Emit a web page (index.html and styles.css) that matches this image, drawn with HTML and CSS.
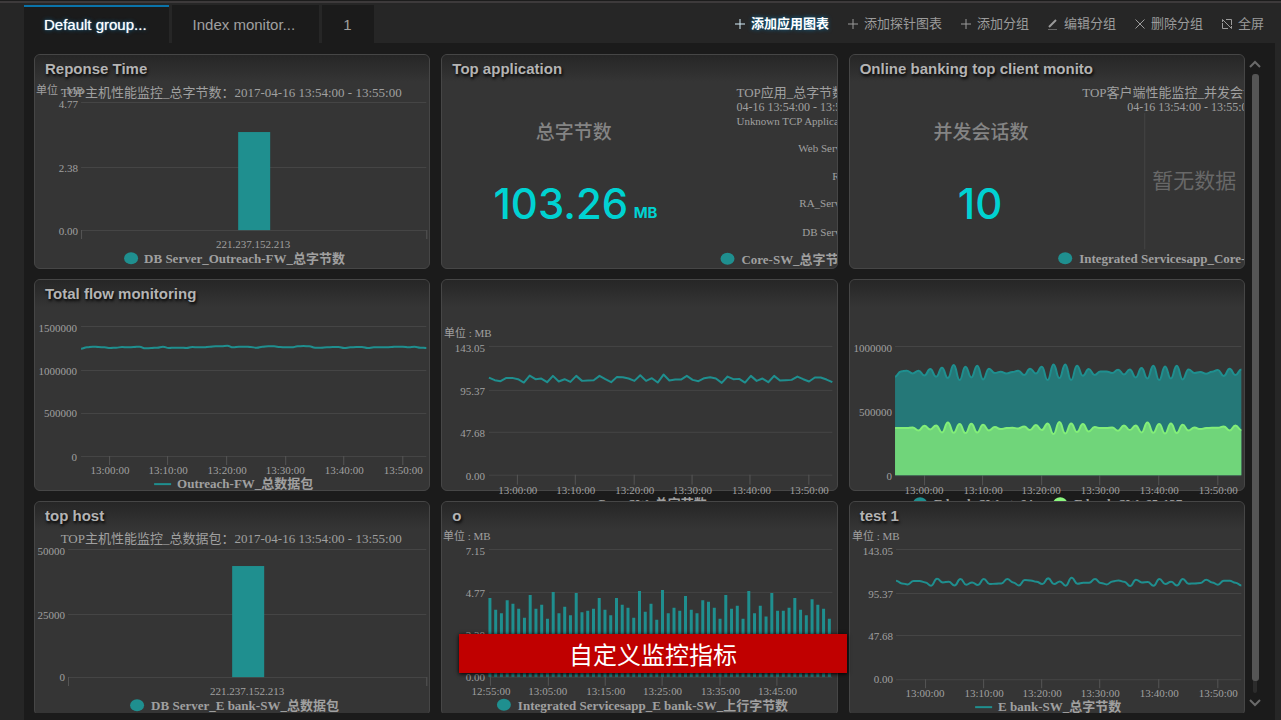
FILE: index.html
```html
<!DOCTYPE html>
<html lang="zh-CN">
<head>
<meta charset="utf-8">
<title>Default group</title>
<link rel="stylesheet" href="styles.css">
</head>
<body>
<div class="app">
  <header class="topbar">
    <nav class="tabs">
      <button class="tab tab-active" type="button">Default group...</button>
      <button class="tab" type="button">Index monitor...</button>
      <button class="tab tab-short" type="button">1</button>
    </nav>
    <div class="actions">
      <button class="action action-on" type="button"><svg class="icon" viewBox="0 0 12 12"><path d="M6 1V11M1 6H11"/></svg>添加应用图表</button>
      <button class="action" type="button"><svg class="icon" viewBox="0 0 12 12"><path d="M6 1V11M1 6H11"/></svg>添加探针图表</button>
      <button class="action" type="button"><svg class="icon" viewBox="0 0 12 12"><path d="M6 1V11M1 6H11"/></svg>添加分组</button>
      <button class="action" type="button"><svg class="icon" viewBox="0 0 12 12"><path class="pen" d="M2 9L9 2"/><path class="faint" d="M1 11.500H10"/></svg>编辑分组</button>
      <button class="action" type="button"><svg class="icon" viewBox="0 0 12 12"><path d="M1.500 1.500L10.500 10.500M10.500 1.500L1.500 10.500"/></svg>删除分组</button>
      <button class="action" type="button"><svg class="icon" viewBox="0 0 12 12"><path d="M5 1.500H10.500V7M1.500 5V10.500H7M1.500 1.500L10.500 10.500M1.500 1.500V4M10.500 10.500V8"/></svg>全屏</button>
    </div>
  </header>

  <main class="board">
    <div class="grid">
      <section class="card">
        <div class="card-head"><h2>Reponse Time</h2></div>
        <svg class="chart" viewBox="35 82 394 186">
          <text class="unit" x="36" y="94">单位 : MB</text>
          <text class="caption" x="231" y="97" text-anchor="middle">TOP主机性能监控_总字节数：2017-04-16 13:54:00 - 13:55:00</text>
          <path class="gridline" d="M81 102.500H426M81 167.500H426M81 230.500H426"/>
          <path class="tick" d="M81.500 230V239M426.500 230V239"/>
          <g class="ylab"><text x="78" y="108">4.77</text><text x="78" y="172">2.38</text><text x="78" y="235">0.00</text></g>
          <rect class="bar" x="238" y="132" width="32" height="98"/>
          <text class="xlab" x="253" y="248">221.237.152.213</text>
          <ellipse class="bar" cx="131" cy="258" rx="7" ry="6"/>
          <text class="legend" x="144" y="263">DB Server_Outreach-FW_总字节数</text>
        </svg>
      </section>

      <section class="card">
        <div class="card-head"><h2>Top application</h2></div>
        <svg class="chart" viewBox="442 82 395 186">
          <text class="metric" x="574" y="139">总字节数</text>
          <text class="value" x="561" y="219">103.26</text>
          <text class="value-unit" x="634" y="218">MB</text>
          <text class="caption" x="737" y="97">TOP应用_总字节数：2017-</text>
          <text class="caption-sub" x="737" y="111">04-16 13:54:00 - 13:55:00</text>
          <g class="label"><text x="737" y="125">Unknown TCP Application</text><text x="799" y="152">Web Server</text><text x="833" y="180">RT</text><text x="800" y="207">RA_Server</text><text x="803" y="236">DB Server</text></g>
          <ellipse class="bar" cx="728" cy="259" rx="7" ry="6"/>
          <text class="legend" x="742" y="264">Core-SW_总字节数</text>
        </svg>
      </section>

      <section class="card">
        <div class="card-head"><h2>Online banking top client monito</h2></div>
        <svg class="chart" viewBox="850 82 394 186">
          <text class="metric" x="981" y="139">并发会话数</text>
          <text class="value" x="980" y="219">10</text>
          <text class="caption" x="1082" y="97">TOP客户端性能监控_并发会话数：2017-</text>
          <text class="caption-sub" x="1127" y="111">04-16 13:54:00 - 13:55:00</text>
          <path class="gridline" d="M1144.500 113V249"/>
          <text class="empty" x="1194" y="188">暂无数据</text>
          <ellipse class="bar" cx="1065" cy="258" rx="7" ry="6"/>
          <text class="legend" x="1079" y="263">Integrated Servicesapp_Core-SW_并发会话数</text>
        </svg>
      </section>

      <section class="card">
        <div class="card-head"><h2>Total flow monitoring</h2></div>
        <svg class="chart" viewBox="35 307 394 183">
          <path class="gridline" d="M81 326.500H426M81 370.500H426M81 413.500H426M81 456.500H426"/>
          <path class="tick" d="M109.500 456V465M167.500 456V465M226.500 456V465M285.500 456V465M343.500 456V465M402.500 456V465"/>
          <g class="ylab"><text x="77" y="332">1500000</text><text x="77" y="375">1000000</text><text x="77" y="417">500000</text><text x="77" y="461">0</text></g>
          <g class="xlab"><text x="110" y="474">13:00:00</text><text x="168" y="474">13:10:00</text><text x="227" y="474">13:20:00</text><text x="285" y="474">13:30:00</text><text x="344" y="474">13:40:00</text><text x="403" y="474">13:50:00</text></g>
          <path class="line" data-series="flow" data-kind="smooth" data-x="81 426" data-top="270"/>
          <path class="line" d="M154 484H171"/>
          <text class="legend" x="177" y="488">Outreach-FW_总数据包</text>
        </svg>
      </section>

      <section class="card">
        <div class="card-head"></div>
        <svg class="chart chart-open" viewBox="442 307 395 183">
          <text class="unit" x="444" y="337">单位 : MB</text>
          <path class="gridline" d="M489 346.500H833M489 390.500H833M489 432.500H833M489 475.500H833"/>
          <path class="tick" d="M517.500 475V485M575.500 475V485M634.500 475V485M692.500 475V485M750.500 475V485M809.500 475V485"/>
          <g class="ylab"><text x="485" y="352">143.05</text><text x="485" y="395">95.37</text><text x="485" y="437">47.68</text><text x="485" y="480">0.00</text></g>
          <g class="xlab"><text x="518" y="494">13:00:00</text><text x="576" y="494">13:10:00</text><text x="635" y="494">13:20:00</text><text x="693" y="494">13:30:00</text><text x="752" y="494">13:40:00</text><text x="810" y="494">13:50:00</text></g>
          <path class="line" data-series="bytes" data-kind="line" data-x="489 833" data-top="270"/>
          <text class="legend" x="597" y="508">Core-SW_总字节数</text>
        </svg>
      </section>

      <section class="card">
        <div class="card-head"></div>
        <svg class="chart chart-open" viewBox="850 307 394 183">
          <path class="gridline" d="M895 346.500H1241M895 412.500H1241M895 475.500H1241"/>
          <path class="tick" d="M924.500 475V485M982.500 475V485M1041.500 475V485M1099.500 475V485M1158.500 475V485M1217.500 475V485"/>
          <g class="ylab"><text x="892" y="352">1000000</text><text x="892" y="416">500000</text><text x="892" y="480">0</text></g>
          <g class="xlab"><text x="924" y="494">13:00:00</text><text x="983" y="494">13:10:00</text><text x="1041" y="494">13:20:00</text><text x="1100" y="494">13:30:00</text><text x="1159" y="494">13:40:00</text><text x="1218" y="494">13:50:00</text></g>
          <path class="area" data-series="small" data-kind="area" data-x="895 1241" data-top="270" data-base="475"/>
          <path class="line" data-series="small" data-kind="smooth" data-x="895 1241" data-top="270"/>
          <path class="area area-alt" data-series="medium" data-kind="area" data-x="895 1241" data-top="270" data-base="475"/>
          <path class="line line-alt" data-series="medium" data-kind="smooth" data-x="895 1241" data-top="270"/>
          <ellipse class="bar" cx="920" cy="503" rx="7" ry="6"/>
          <text class="legend" x="934" y="508">E bank-SW_&lt;=64</text>
          <ellipse class="bar-alt" cx="1060" cy="503" rx="7" ry="6"/>
          <text class="legend" x="1074" y="508">E bank-SW_65-127</text>
        </svg>
      </section>

      <section class="card">
        <div class="card-head"><h2>top host</h2></div>
        <svg class="chart" viewBox="35 529 394 186">
          <text class="caption" x="231" y="543" text-anchor="middle">TOP主机性能监控_总数据包：2017-04-16 13:54:00 - 13:55:00</text>
          <path class="gridline" d="M68 549.500H426M68 614.500H426M68 677.500H426"/>
          <path class="tick" d="M68.500 677V686M426.500 677V686"/>
          <g class="ylab"><text x="65" y="555">50000</text><text x="65" y="619">25000</text><text x="65" y="681">0</text></g>
          <rect class="bar" x="232" y="566" width="32" height="111"/>
          <text class="xlab" x="247" y="695">221.237.152.213</text>
          <ellipse class="bar" cx="137" cy="705" rx="7" ry="6"/>
          <text class="legend" x="151" y="710">DB Server_E bank-SW_总数据包</text>
        </svg>
      </section>

      <section class="card">
        <div class="card-head"><h2>o</h2></div>
        <svg class="chart" viewBox="442 529 395 186">
          <text class="unit" x="443" y="540">单位 : MB</text>
          <path class="gridline" d="M489 549.500H833M489 592.500H833M489 635.500H833M489 677.500H833"/>
          <path class="tick" d="M490.500 677V686M548.500 677V686M605.500 677V686M662.500 677V686M720.500 677V686M777.500 677V686"/>
          <g class="ylab"><text x="485" y="555">7.15</text><text x="485" y="597">4.77</text><text x="485" y="639">2.38</text><text x="485" y="681">0.00</text></g>
          <path class="bars" data-series="uplink" data-kind="bars" data-x="490 830" data-top="490" data-base="677"/>
          <g class="xlab"><text x="491" y="695">12:55:00</text><text x="548" y="695">13:05:00</text><text x="606" y="695">13:15:00</text><text x="663" y="695">13:25:00</text><text x="721" y="695">13:35:00</text><text x="778" y="695">13:45:00</text></g>
          <ellipse class="bar" cx="504" cy="705" rx="7" ry="6"/>
          <text class="legend" x="518" y="710">Integrated Servicesapp_E bank-SW_上行字节数</text>
        </svg>
      </section>

      <section class="card">
        <div class="card-head"><h2>test 1</h2></div>
        <svg class="chart" viewBox="850 529 394 186">
          <text class="unit" x="852" y="540">单位 : MB</text>
          <path class="gridline" d="M896 549.500H1241M896 593.500H1241M896 635.500H1241M896 679.500H1241"/>
          <path class="tick" d="M925.500 679V688M983.500 679V688M1041.500 679V688M1099.500 679V688M1158.500 679V688M1217.500 679V688"/>
          <g class="ylab"><text x="893" y="555">143.05</text><text x="893" y="598">95.37</text><text x="893" y="640">47.68</text><text x="893" y="683">0.00</text></g>
          <g class="xlab"><text x="925" y="697">13:00:00</text><text x="984" y="697">13:10:00</text><text x="1042" y="697">13:20:00</text><text x="1100" y="697">13:30:00</text><text x="1159" y="697">13:40:00</text><text x="1218" y="697">13:50:00</text></g>
          <path class="line" data-series="bytes" data-kind="smooth" data-x="896 1241" data-top="473"/>
          <path class="line" d="M975 707H992"/>
          <text class="legend" x="998" y="711">E bank-SW_总字节数</text>
        </svg>
      </section>
    </div>

    <div class="scroll">
      <svg class="arrow" viewBox="0 0 12 8"><path d="M1 7L6 2L11 7"/></svg>
      <div class="track"><div class="thumb"></div></div>
      <svg class="arrow" viewBox="0 0 12 8"><path d="M1 1L6 6L11 1"/></svg>
    </div>
  </main>
  <div class="banner">自定义监控指标</div>
</div>
<script src="charts.js"></script>
</body>
</html>
```
FILE: styles.css
```css
* { box-sizing: border-box; }

body {
  margin: 0;
  background: #262626;
  color: #a6a6a6;
  font-family: "Liberation Sans", "Noto Sans CJK SC", sans-serif;
}

button {
  border: 0;
  padding: 0;
  background: none;
  color: inherit;
  font: inherit;
}

.app {
  position: relative;
  display: flex;
  flex-direction: column;
  height: 100vh;
  overflow: hidden;
  border-top: 1px solid #1c1c1c;
  padding: 0 6px 0 24px;
}

.app::before {
  content: "";
  height: 2px;
  margin: 0 -6px 0 -24px;
  flex: none;
  background: #3d3a3b;
}

/* Top bar */
.topbar {
  display: flex;
  flex: none;
  justify-content: space-between;
  height: 40px;
  padding-top: 2px;
}

.tabs { display: flex; gap: 3px; }

.tab {
  padding: 0 24px 1px 21px;
  border-top: 2px solid #1b1b1b;
  background: #1b1b1b;
  color: #a0a0a0;
  font-size: 15px;
}

.tab-active {
  padding: 0 22px 1px 20px;
  border-top-color: #0a73a9;
  color: #fff;
  text-shadow: 0 0 4px #0a6fa5, 0 0 1px #fff;
}

.tab-short { padding: 0 23px 1px 21px; }

.actions {
  display: flex;
  align-items: center;
  gap: 18px;
  padding-right: 11px;
}

.action {
  display: flex;
  align-items: center;
  gap: 5px;
  color: #9b9b9b;
  font-size: 13px;
  line-height: 20px;
  white-space: nowrap;
}

.action-on {
  color: #fff;
  font-weight: 700;
  text-shadow: 0 0 4px #0a6fa5;
}

.icon {
  width: 12px;
  height: 12px;
  fill: none;
  stroke: currentColor;
  stroke-width: 1;
}

.action-on .icon { stroke: #d5eefa; }
.pen { stroke-width: 2; }
.faint { stroke: #666; }

/* Chart board */
.board {
  display: flex;
  flex: 1;
  min-height: 0;
  padding: 11px 14px 7px 10px;
  background: #1b1b1b;
}

.grid {
  display: grid;
  flex: 1;
  grid-template-columns: repeat(3, 1fr);
  align-content: start;
  gap: 10px 11px;
  overflow: hidden;
}

.card {
  position: relative;
  border: 1px solid #464646;
  border-radius: 6px;
  background: #353535;
}

.card-head {
  height: 27px;
  padding-left: 10px;
  border-radius: 5px 5px 0 0;
  background: linear-gradient(#262626, #353535);
}

.card-head h2 {
  margin: 0;
  color: #b4b4b4;
  font-size: 15px;
  line-height: 28px;
  text-shadow: 1px 2px 3px #000;
}

.chart {
  display: block;
  width: 100%;
  height: auto;
  overflow: hidden;
  fill: #a0a0a0;
  font-family: "Liberation Serif", "Noto Sans CJK SC", serif;
  font-size: 11px;
}

.chart-open { overflow: visible; }

.caption { font-size: 13px; }
.caption-sub { font-size: 12px; }
.ylab { text-anchor: end; }
.xlab { text-anchor: middle; }

.legend {
  font-size: 13px;
  font-weight: 700;
}

.gridline, .tick {
  fill: none;
  stroke: #454545;
}

.tick { stroke: #555; }
.bar { fill: #1f8f8f; }
.bar-alt { fill: #8cf77f; }

.line {
  fill: none;
  stroke: #1f8f8f;
  stroke-width: 2;
  stroke-linejoin: round;
}

.line-alt { stroke: #83ee78; }
.area { fill: #257878; }
.area-alt { fill: #70d57a; }

.bars {
  fill: none;
  stroke: #1f8f8f;
  stroke-width: 3;
}

.metric {
  fill: #848484;
  font-family: "Noto Sans CJK SC", sans-serif;
  font-size: 19px;
  font-weight: 500;
  text-anchor: middle;
}

.value {
  fill: #00d2d2;
  font-family: Inter, sans-serif;
  font-size: 42px;
  font-weight: 500;
  text-anchor: middle;
}

.value-unit {
  fill: #00d2d2;
  font-family: Inter, sans-serif;
  font-size: 15px;
  font-weight: 700;
}

.empty {
  fill: #686868;
  font-family: "Noto Sans CJK SC", sans-serif;
  font-size: 21px;
  text-anchor: middle;
}

/* Scroll rail */
.scroll {
  display: flex;
  flex: none;
  flex-direction: column;
  align-items: center;
  width: 12px;
  margin: 6px 0 6px 4px;
}

.arrow {
  width: 12px;
  height: 8px;
  fill: none;
  stroke: #6a6a6a;
  stroke-width: 2;
}

.track {
  display: flex;
  flex: 1;
  justify-content: center;
  width: 4px;
  margin: 6px 0;
  border-radius: 2px;
  background: #2c2c2c;
}

.thumb {
  flex: none;
  width: 7px;
  height: 98%;
  border-radius: 3px;
  background: #555;
}

.banner {
  position: absolute;
  left: 459px;
  top: 633px;
  width: 388px;
  background: #c00000;
  box-shadow: 0 1px 4px #000;
  color: #fff;
  font-family: "Noto Sans CJK SC", sans-serif;
  font-size: 24px;
  line-height: 39px;
  text-align: center;
}
```
FILE: charts.js
```javascript
// One sample per minute; each value is a depth below the chart's top, in thirds of a unit.
const series = {
  flow: [236,232,230,231,232,234,233,231,232,231,230,235,234,233,230,234,233,233,234,231,232,232,230,229,229,227,232,230,230,231,233,230,229,229,231,232,232,229,228,229,233,233,232,231,231,234,232,231,231,234,232,232,232,231,230,230,232,230,233,234],
  bytes: [323,331,334,324,324,328,338,317,328,326,337,318,335,328,336,318,333,332,331,318,328,337,321,322,326,333,316,333,325,338,314,332,329,329,318,330,334,325,322,326,339,320,328,327,338,318,333,326,337,318,332,331,330,320,328,335,323,323,329,337],
  small: [320,304,302,310,302,316,297,320,293,324,285,330,290,322,287,328,296,309,305,310,306,302,315,296,310,290,330,283,324,283,330,287,317,297,315,304,304,309,299,313,298,322,294,325,287,330,289,325,287,328,298,309,306,311,305,300,318,296,315,298],
  medium: [474,474,474,472,481,467,478,466,487,457,488,462,489,461,487,464,481,471,477,474,473,475,469,480,465,480,460,492,456,490,460,486,462,484,471,474,474,472,482,466,480,466,487,457,488,462,490,460,489,464,481,472,477,474,473,473,469,481,466,480],
  uplink: [324,360,370,331,342,357,384,315,357,345,387,306,370,351,376,309,367,363,357,324,360,376,324,345,354,384,303,366,342,390,300,370,354,363,318,360,370,331,336,354,387,315,357,348,387,303,370,348,380,309,363,363,354,324,360,376,328,345,357,387]
};

document.querySelectorAll("[data-series]").forEach((path) => {
  const { kind, x, top, base } = path.dataset;
  const values = series[path.dataset.series];
  const [x0, x1] = x.split(" ").map(Number);
  const step = (x1 - x0) / (values.length - 1);
  const points = values.map((v, i) => [x0 + i * step, Number(top) + v / 3]);

  if (kind === "bars") {
    path.setAttribute("d", points.map(([px, py]) => `M${px} ${base}V${py}`).join(""));
    return;
  }

  let d = `M${points[0].join(" ")}`;
  for (let i = 1; i < points.length; i++) {
    const [ax, ay] = points[i - 1];
    const [bx, by] = points[i];
    const mid = (ax + bx) / 2;
    d += kind === "line" ? `L${bx} ${by}` : `C${mid} ${ay} ${mid} ${by} ${bx} ${by}`;
  }
  if (kind === "area") d += `V${base}H${x0}Z`;
  path.setAttribute("d", d);
});
```
